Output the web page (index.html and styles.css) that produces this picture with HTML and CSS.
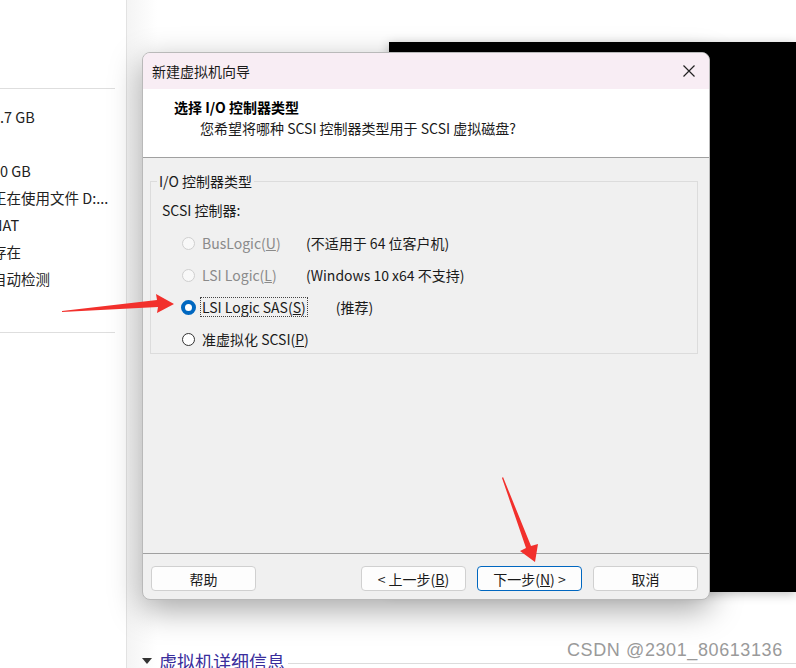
FILE: index.html
```html
<!DOCTYPE html>
<html>
<head>
    <title>新建虚拟机向导</title>
    <link rel="stylesheet" href="styles.css">
</head>
<body>
    <!-- фоновое окно -->
    <div class="app">
        <div class="sidebar">
            <div class="rule"></div>
            <ul class="specs">
                <li>1.7 GB</li>
                <li>1</li>
                <li>20 GB</li>
                <li>正在使用文件 D:...</li>
                <li>NAT</li>
                <li>存在</li>
                <li>自动检测</li>
            </ul>
            <div class="rule"></div>
        </div>
        <div class="main">
            <div class="details"><span class="tri"></span><span class="details-title">虚拟机详细信息</span><span class="details-line"></span></div>
        </div>
    </div>

    <div class="vm-screen"></div>

    <!-- диалог -->
    <div class="dialog">
        <div class="titlebar">
            <span>新建虚拟机向导</span>
            <svg class="close" width="14" height="14" viewBox="0 0 14 14"><path d="M1.5 1.5 L12.5 12.5 M12.5 1.5 L1.5 12.5" stroke="#222" stroke-width="1.2" fill="none"/></svg>
        </div>
        <div class="header">
            <div class="h-title">选择 I/O 控制器类型</div>
            <div class="h-sub">您希望将哪种 SCSI 控制器类型用于 SCSI 虚拟磁盘?</div>
        </div>
        <div class="body">
            <fieldset class="group">
                <legend>I/O 控制器类型</legend>
                <div class="group-label">SCSI 控制器:</div>
                <div class="opt disabled">
                    <span class="radio"></span><span class="opt-name">BusLogic(<u>U</u>)</span>
                    <span class="opt-note">(不适用于 64 位客户机)</span>
                </div>
                <div class="opt disabled">
                    <span class="radio"></span><span class="opt-name">LSI Logic(<u>L</u>)</span>
                    <span class="opt-note">(Windows 10 x64 不支持)</span>
                </div>
                <div class="opt checked">
                    <span class="radio"></span><span class="opt-name focus">LSI Logic SAS(<u>S</u>)</span>
                    <span class="opt-note rec">(推荐)</span>
                </div>
                <div class="opt">
                    <span class="radio"></span><span class="opt-name wide">准虚拟化 SCSI(<u>P</u>)</span>
                </div>
            </fieldset>
        </div>
        <div class="footer">
            <button class="btn">帮助</button>
            <div class="spacer"></div>
            <button class="btn">&lt; 上一步(<u>B</u>)</button>
            <button class="btn primary">下一步(<u>N</u>) &gt;</button>
            <button class="btn">取消</button>
        </div>
    </div>

    <!-- стрелки -->
    <svg class="arrows" width="796" height="668" viewBox="0 0 796 668">
        <polygon points="62,311 157,300 156,294 174,304 157,313 158,307 62,312" fill="#f2302c"/>
        <polygon points="502,478 526,548 520,551 535,562 538,544 531,546 503,477" fill="#f2302c"/>
    </svg>

    <div class="watermark">CSDN @2301_80613136</div>
</body>
</html>
```

FILE: styles.css
```css
html, body { margin: 0; padding: 0; }
body { width: 796px; height: 668px; overflow: hidden; position: relative; background: #fff;
    font-family: "Noto Sans CJK SC", "Noto Sans", sans-serif; font-size: 14px; color: #1a1a1a; }

.app { display: flex; height: 668px; }
.sidebar { width: 127px; border-right: 1px solid #e2e2e2; padding-top: 88px; box-sizing: border-box; }
.rule { height: 1px; background: #dedede; margin-right: 11px; }
.specs { list-style: none; margin: 0; padding: 14px 0 0 0; margin-left: -8px; height: 229px; }
.specs li { height: 27px; line-height: 27px; white-space: nowrap; font-size: 14.5px; color: #222; }
.main { flex: 1; display: flex; flex-direction: column; justify-content: flex-end; background: linear-gradient(to right, #f4f4f4, #fff 30px); }
.details { display: flex; align-items: center; padding-left: 15px; height: 20px; margin-bottom: -3px; }
.tri { width: 0; height: 0; border-left: 5px solid transparent; border-right: 5px solid transparent; border-top: 6px solid #333; margin-right: 7px; }
.details-title { color: #3a2e9c; font-size: 18px; }
.details-line { flex: 1; height: 1px; background: #dcdcdc; margin-left: 3px; margin-top: 4px; }

.vm-screen { position: absolute; left: 389px; top: 42px; right: 0; height: 550px; background: #000;
    box-shadow: 0 2px 10px rgba(0,0,0,0.25); }

.dialog { position: absolute; left: 142px; top: 52px; width: 568px; height: 548px; box-sizing: border-box;
    border: 1px solid #b9b9b9; border-radius: 8px; overflow: hidden; background: #f0f0f0;
    display: flex; flex-direction: column; box-shadow: 0 10px 32px rgba(0,0,0,0.35); }
.titlebar { height: 36px; background: #f8edf4; display: flex; align-items: center; justify-content: space-between;
    padding: 0 13px 0 9px; font-size: 14px; color: #1a1a1a; }
.header { height: 69px; background: #fff; border-bottom: 1px solid #a0a0a0; box-sizing: border-box; padding: 8px 0 0 31px; }
.h-title { font-weight: bold; font-size: 14px; line-height: 20px; color: #000; }
.h-sub { padding-left: 26px; line-height: 22px; font-size: 14px; color: #1a1a1a; }

.body { flex: 1; padding: 14px 11px 0 7px; }
.group { margin: 0; border: 1px solid #dcdcdc; padding: 0 0 0 11px; height: 182px; box-sizing: border-box; }
.group legend { padding: 0 2px; margin-left: -5px; font-size: 14px; line-height: 18px; color: #1a1a1a; }
.group-label { margin-top: 9px; height: 28px; line-height: 22px; color: #1a1a1a; }
.opt { display: flex; align-items: center; height: 32px; padding-left: 20px; position: relative; white-space: nowrap; }
.radio { width: 13px; height: 13px; border-radius: 50%; border: 1px solid #333; background: #fff; box-sizing: border-box; margin-right: 6px; flex: none; }
.opt-name { width: 103px; padding: 0 1px; line-height: 18px; }
.opt-name.wide { width: auto; }
.opt-note { color: #1a1a1a; }
.opt-note.rec { margin-left: 29px; }
.opt.disabled .radio { border-color: #cfcfcf; background: #f8f8f8; }
.opt.disabled .opt-name { color: #8a8a8a; }
.opt.checked .radio { border: 4px solid #0067c0; background: #fff; width: 15px; height: 15px; margin-left: -1px; margin-right: 5px; }
.focus { outline: 1px dotted #444; width: auto; margin-right: 0; }

.footer { height: 46px; border-top: 1px solid #a0a0a0; box-sizing: border-box; display: flex; align-items: flex-start;
    padding: 12px 11px 0 8px; gap: 11px; }
.spacer { flex: 1; }
.btn { width: 105px; height: 25px; border: 1px solid #d0d0d0; border-radius: 4px; background: #fdfdfd; flex: none;
    font-family: "Noto Sans CJK SC", "Noto Sans", sans-serif; font-size: 14px; color: #1a1a1a; padding: 0; line-height: 22px; }
.btn.primary { border-color: #0067c0; }

.arrows { position: absolute; left: 0; top: 0; }
.watermark { position: absolute; left: 567px; top: 640px; font-family: "Liberation Sans", Arial, sans-serif; font-size: 18px;
    color: #9a9a9a; text-shadow: 0 0 1px #fff, 0 0 2px #fff; letter-spacing: 0.6px; }
```
